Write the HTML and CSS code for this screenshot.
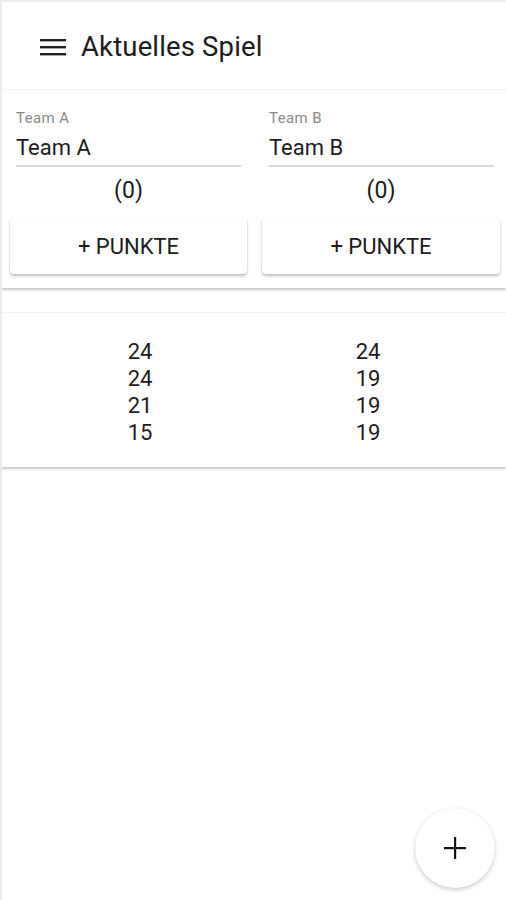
FILE: index.html
```html
<!DOCTYPE html>
<html lang="de">
<head>
<meta charset="utf-8">
<link rel="stylesheet" href="styles.css">
</head>
<body>
<div class="app">
  <header class="bar">
    <svg class="menu" width="26" height="18" viewBox="0 0 26 18"><rect x="0" y="1" width="26" height="2.4" fill="#222"/><rect x="0" y="8" width="26" height="2.4" fill="#222"/><rect x="0" y="15" width="26" height="2.4" fill="#222"/></svg>
    <h1 class="title">Aktuelles Spiel</h1>
  </header>
  <section class="card teams">
    <div class="team">
      <div class="field">
        <span class="label">Team A</span>
        <span class="value">Team A</span>
      </div>
      <div class="count">(0)</div>
      <button class="btn">+ PUNKTE</button>
    </div>
    <div class="team">
      <div class="field">
        <span class="label">Team B</span>
        <span class="value">Team B</span>
      </div>
      <div class="count">(0)</div>
      <button class="btn">+ PUNKTE</button>
    </div>
  </section>
  <section class="card scores">
    <div class="col"><span>24</span><span>24</span><span>21</span><span>15</span></div>
    <div class="col"><span>24</span><span>19</span><span>19</span><span>19</span></div>
  </section>
  <button class="fab"><svg width="22" height="22" viewBox="0 0 22 22"><rect x="10" y="0" width="2.2" height="22" fill="#111"/><rect x="0" y="10" width="22" height="2.2" fill="#111"/></svg></button>
</div>
</body>
</html>
```
FILE: styles.css
```css
* { box-sizing: border-box; }
html, body { margin: 0; padding: 0; background: #fff; }
body { font-family: Roboto, "Liberation Sans", sans-serif; color: #1c1c1c; }
.app {
  position: relative;
  width: 506px;
  height: 900px;
  border-left: 2px solid #ececec;
  border-top: 2px solid #ececec;
  overflow: hidden;
}
.bar {
  height: 88px;
  display: flex;
  align-items: center;
  padding-left: 38px;
  border-bottom: 1px solid #f2f2f2;
}
.menu { margin-right: 15px; margin-top: 2px; flex: none; }
.title { margin: 0; font-size: 27.5px; line-height: 34px; font-weight: 400; color: #1c1c1c; margin-top: 3px; letter-spacing: 0.15px; }
.card { background: #fff; }
.teams {
  display: grid;
  grid-template-columns: 237px 238px;
  column-gap: 15px;
  padding: 19px 6px 14px 8px;
  box-shadow: 0 2px 2px rgba(0,0,0,0.22);
}
.team { display: flex; flex-direction: column; }
.field {
  margin: 0 6px;
  display: flex;
  flex-direction: column;
  border-bottom: 2px solid #d8d8d8;
  padding-bottom: 3px;
}
.team + .team .field { margin-left: 7px; }
.label { font-size: 15px; color: #8a8a8a; line-height: 18px; letter-spacing: 0.4px; }
.value { font-size: 22px; color: #1c1c1c; line-height: 28px; margin-top: 7px; }
.count { text-align: center; font-size: 23px; line-height: 28px; margin-top: 10px; color: #1c1c1c; }
.btn {
  margin-top: 13px;
  height: 56px;
  border: none;
  background: #fff;
  border-radius: 4px;
  box-shadow: 0 2px 3px rgba(0,0,0,0.25), 0 0 1px rgba(0,0,0,0.12);
  font-family: Roboto, "Liberation Sans", sans-serif;
  font-size: 22px;
  color: #1c1c1c;
  font-weight: 400;
  padding: 0;
}
.scores {
  margin-top: 24px;
  border-top: 1px solid #f2f2f2;
  display: grid;
  grid-template-columns: 1fr 1fr;
  padding: 25px 0 21px;
  box-shadow: 0 2px 2px rgba(0,0,0,0.22);
}
.col { display: flex; flex-direction: column; align-items: center; font-size: 22px; line-height: 27px; color: #1c1c1c; }
.col:first-child { padding-left: 24px; }
.col:last-child { padding-right: 24px; }
.fab {
  position: absolute;
  left: 413px;
  top: 806px;
  width: 80px;
  height: 80px;
  border-radius: 50%;
  border: none;
  background: #fff;
  box-shadow: 0 2px 4px rgba(0,0,0,0.2), 0 0 1px rgba(0,0,0,0.1);
  display: flex;
  align-items: center;
  justify-content: center;
}
```
